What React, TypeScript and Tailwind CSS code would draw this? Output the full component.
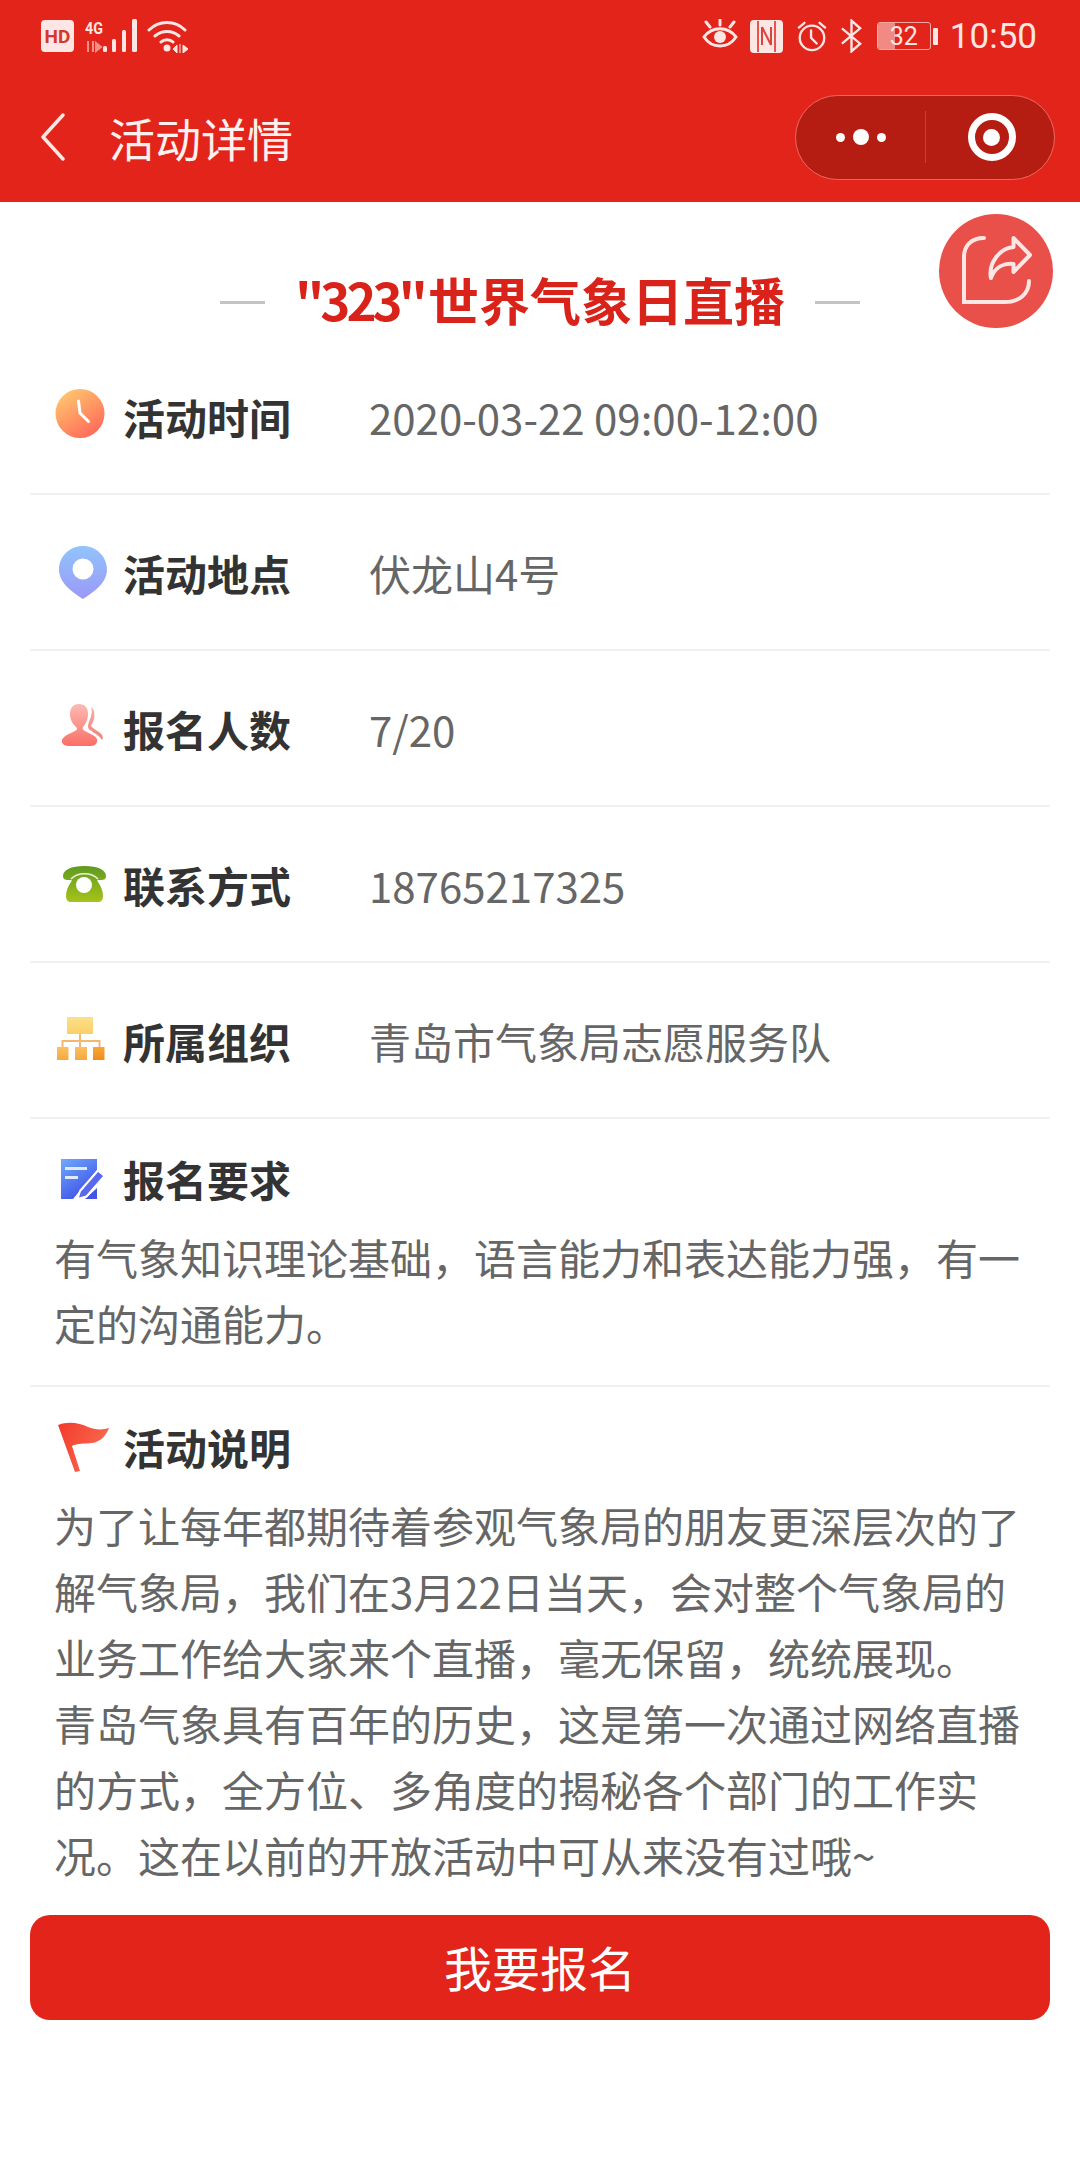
import type { ReactNode } from 'react'

const CJK = "font-['Noto_Sans_CJK_SC','Noto_Sans',sans-serif]"

function ClockIcon() {
  return (
    <svg width="64" height="64" viewBox="0 0 64 64">
      <defs>
        <linearGradient id="clockFill" x1="0.15" y1="0" x2="0.8" y2="1">
          <stop offset="0" stopColor="#ffcb70" />
          <stop offset="1" stopColor="#ff6558" />
        </linearGradient>
      </defs>
      <circle cx="30" cy="29.500" r="24.500" fill="url(#clockFill)" />
      <path d="M28.500 17l1.500 12 8.500 8.500" fill="none" stroke="#fff" strokeWidth="3" strokeLinecap="round" strokeLinejoin="round" />
    </svg>
  )
}

function PinIcon() {
  return (
    <svg width="64" height="64" viewBox="0 0 64 64">
      <defs>
        <linearGradient id="pinFill" x1="0" y1="0" x2="0" y2="1">
          <stop offset="0" stopColor="#92c4fb" />
          <stop offset="1" stopColor="#9a98f8" />
        </linearGradient>
      </defs>
      <path
        d="M33 6C19.700 6 9 16.500 9 29.500c0 14 14 23 24 29.500 10-6.500 24-15.500 24-29.500C57 16.500 46.300 6 33 6z"
        fill="url(#pinFill)"
      />
      <circle cx="33" cy="29" r="10.500" fill="#fff" />
    </svg>
  )
}

function PeopleIcon() {
  return (
    <svg width="64" height="64" viewBox="0 0 64 64">
      <defs>
        <linearGradient id="peopleFill" x1="0" y1="0" x2="0" y2="1">
          <stop offset="0" stopColor="#fbbab5" />
          <stop offset="1" stopColor="#fb6f66" />
        </linearGradient>
        <linearGradient id="peopleBack" x1="0" y1="0" x2="0" y2="1">
          <stop offset="0" stopColor="#f9aaa4" />
          <stop offset="1" stopColor="#fb7f76" />
        </linearGradient>
      </defs>
      <path
        d="M41 11c3 2 4 7 3 12-1 3-2 5-3 7 2 3 8 5 11 9 1 2 1 4 0 5-3-5-8-7-12-10-3-2-2-5-1-8 2-5 4-10 2-15z"
        fill="url(#peopleBack)"
      />
      <path
        d="M29 8c6 0 9 4 9 10 0 6-3 11-5 13-1 2 0 3 2 4 5 3 10 4 12 8 1 4-2 7-6 7H19c-5 0-8-3-7-6 2-5 8-6 13-9 2-1 3-2 1-4-3-3-6-7-6-13 0-6 3-10 9-10z"
        fill="url(#peopleFill)"
      />
    </svg>
  )
}

function PhoneIcon() {
  return (
    <svg width="64" height="64" viewBox="0 0 64 64">
      <defs>
        <linearGradient id="phoneFill" x1="0" y1="0" x2="0" y2="1">
          <stop offset="0" stopColor="#5e9a20" />
          <stop offset="1" stopColor="#a6c31a" />
        </linearGradient>
      </defs>
      <path
        d="M13 24c0-6 8-10 21.500-10S56 18 56 24c0 3-2 4-5 4h-3c-1 0-1 1 0 2 3 4 5 9 5 14 0 4-2 6-5 6H21c-3 0-5-2-5-6 0-5 2-10 5-14 1-1 1-2 0-2h-3c-3 0-5-1-5-4z"
        fill="url(#phoneFill)"
      />
      <path d="M21 27c7-7 20-7 27 0" fill="none" stroke="#fff" strokeWidth="1.500" opacity="0.850" />
      <circle cx="34" cy="33" r="8" fill="#fff" />
    </svg>
  )
}

function OrgIcon() {
  return (
    <svg width="64" height="64" viewBox="0 0 64 64">
      <defs>
        <linearGradient id="orgTop" x1="0" y1="0" x2="0" y2="1">
          <stop offset="0" stopColor="#fce08a" />
          <stop offset="1" stopColor="#fad067" />
        </linearGradient>
        <linearGradient id="orgLeft" x1="0" y1="0" x2="0" y2="1">
          <stop offset="0" stopColor="#fbc063" />
          <stop offset="1" stopColor="#f6a840" />
        </linearGradient>
        <linearGradient id="orgRight" x1="0" y1="0" x2="0" y2="1">
          <stop offset="0" stopColor="#f7a63a" />
          <stop offset="1" stopColor="#f08c18" />
        </linearGradient>
      </defs>
      <rect x="17" y="9" width="26" height="17" fill="url(#orgTop)" />
      <path d="M30 26v13M12.500 39v-6h37v6" fill="none" stroke="#f2b870" strokeWidth="2" />
      <rect x="7" y="39" width="11.500" height="13" fill="url(#orgLeft)" />
      <rect x="25" y="39" width="12" height="13" fill="url(#orgLeft)" />
      <rect x="43" y="39" width="11.500" height="13" fill="url(#orgRight)" />
    </svg>
  )
}

function NoteIcon() {
  return (
    <svg width="64" height="64" viewBox="0 0 64 64">
      <defs>
        <linearGradient id="noteFill" x1="0" y1="0" x2="0.600" y2="1">
          <stop offset="0" stopColor="#70aafb" />
          <stop offset="1" stopColor="#3f51e8" />
        </linearGradient>
      </defs>
      <path d="M11 13h36v11L23 53H11z" fill="url(#noteFill)" />
      <path d="M47 42v11H35z" fill="#4552e6" />
      <rect x="15" y="21" width="22" height="3" fill="#dfeafe" />
      <rect x="15" y="30" width="13" height="3" fill="#dfeafe" />
      <path d="M27.500 53l2.500-8 18-20.500 6.500 5.500-18 20.500z" fill="#5a68ee" stroke="#fff" strokeWidth="2" strokeLinejoin="round" />
    </svg>
  )
}

function FlagIcon() {
  return (
    <svg width="64" height="64" viewBox="0 0 64 64">
      <defs>
        <linearGradient id="flagFill" x1="0" y1="0" x2="1" y2="0.500">
          <stop offset="0" stopColor="#f23a2c" />
          <stop offset="1" stopColor="#fb6a50" />
        </linearGradient>
      </defs>
      <path
        d="M8 11C18 7 30 9 38 13c7 3 15 3 21 1-3 8-9 14-17 15-8 1-14 0-20 3l8 25-5 1z"
        fill="url(#flagFill)"
      />
    </svg>
  )
}

function StatusLeft() {
  return (
    <div className="flex items-center">
      <div className="flex h-[32px] w-[33px] items-center justify-center rounded-[4px] bg-[#fde6e3] font-['Roboto',sans-serif] text-[19px] leading-none font-bold text-[#d9352a]">
        HD
      </div>
      <svg className="ml-[11px]" width="53" height="34" viewBox="0 0 53 34">
        <text x="0" y="15" fill="#fde6e3" fontFamily="Roboto, sans-serif" fontSize="16" fontWeight="700" textLength="18" lengthAdjust="spacingAndGlyphs">
          4G
        </text>
        <path d="M3 22v11M8 22v11M11 24l5 4-5 4z" stroke="#f59089" strokeWidth="2" fill="#f59089" />
        <rect x="18" y="27" width="4" height="6" rx="1.500" fill="#fde6e3" />
        <rect x="27" y="20" width="4" height="13" rx="1.500" fill="#fde6e3" />
        <rect x="37" y="11" width="4" height="22" rx="1.500" fill="#fde6e3" />
        <rect x="47" y="0" width="5" height="33" rx="1.500" fill="#fde6e3" />
      </svg>
      <svg className="ml-[9px]" width="42" height="34" viewBox="0 0 42 34">
        <path d="M2 11c10-10 26-10 36 0M8 17c7-6 17-6 24 0M14 23c3-3 9-3 12 0" fill="none" stroke="#fde6e3" strokeWidth="3" strokeLinecap="round" />
        <circle cx="20" cy="29" r="3.500" fill="#fde6e3" />
        <path d="M26 30l4-4v8zM33 25v9M36 26l5 4-5 4z" fill="#fde6e3" stroke="#fde6e3" strokeWidth="1" />
      </svg>
    </div>
  )
}

function StatusRight() {
  return (
    <div className="flex items-center">
      <svg width="36" height="34" viewBox="0 0 36 34">
        <path d="M2 18c8-11 24-11 32 0-8 12-24 12-32 0z" fill="none" stroke="#fde6e3" strokeWidth="3" />
        <circle cx="18" cy="18" r="6" fill="#fde6e3" />
        <path d="M8 8L4 3M18 6V1M28 8l4-5" stroke="#fde6e3" strokeWidth="3" strokeLinecap="round" />
      </svg>
      <svg className="ml-[12px]" width="33" height="34" viewBox="0 0 33 34">
        <rect x="0" y="1" width="33" height="33" rx="4" fill="#fde6e3" />
        <path d="M8 2v31M25 2v31" stroke="#e3241a" strokeWidth="1.500" />
        <path d="M12 8v18M21 8v18M12 8l9 18" fill="none" stroke="#d9453c" strokeWidth="2" />
      </svg>
      <svg className="ml-[13px]" width="32" height="34" viewBox="0 0 34 34">
        <circle cx="17" cy="19" r="13" fill="none" stroke="#fde6e3" strokeWidth="2.500" />
        <path d="M16 11v8l6 6M3 8l6-5M31 8l-6-5" fill="none" stroke="#fde6e3" strokeWidth="2.500" strokeLinecap="round" />
      </svg>
      <svg className="ml-[12px]" width="23" height="34" viewBox="0 0 24 34">
        <path d="M2 9l19 16-9 8V1l9 8L2 25" fill="none" stroke="#fde6e3" strokeWidth="2.500" />
      </svg>
      <div className="relative ml-[14px] flex h-[28px] w-[54px] items-center justify-center overflow-hidden rounded-[3px] border border-[#f5a9a3]">
        <div className="absolute top-0 bottom-0 left-0 w-[17px] bg-[#f08a83]" />
        <span className="relative font-['Roboto',sans-serif] text-[25px] leading-none text-[#fde6e3]">32</span>
      </div>
      <div className="ml-[2px] h-[17px] w-[5px] rounded-[1px] bg-[#fde6e3]" />
      <span className="ml-[12px] font-['Roboto',sans-serif] text-[35px] leading-none text-[#fde6e3]">10:50</span>
    </div>
  )
}

function Capsule() {
  return (
    <div className="flex h-[85px] w-[260px] items-center rounded-full border border-[#ec6a60] bg-[#b51c12]">
      <div className="flex h-[52px] w-[130px] items-center justify-center gap-[8px] border-r border-[#cf3c30]">
        <span className="h-[9px] w-[9px] rounded-full bg-white" />
        <span className="h-[16px] w-[16px] rounded-full bg-white" />
        <span className="h-[9px] w-[9px] rounded-full bg-white" />
      </div>
      <div className="flex flex-1 items-center justify-center pl-[3px]">
        <div className="flex h-[48px] w-[48px] items-center justify-center rounded-full border-[7px] border-white">
          <span className="h-[17px] w-[17px] rounded-full bg-white" />
        </div>
      </div>
    </div>
  )
}

function InfoRow({ icon, label, value }: { icon: ReactNode; label: string; value: string }) {
  return (
    <div className="flex h-[156px] items-center border-b-2 border-[#f0f0f0]">
      <div className="ml-[20px] w-[73px]">{icon}</div>
      <div className="w-[246px] text-[42px] font-bold text-[#333]">{label}</div>
      <div className="text-[42px] text-[#666]">{value}</div>
    </div>
  )
}

function TextSection({ icon, label, children }: { icon: ReactNode; label: string; children: ReactNode }) {
  return (
    <div>
      <div className="flex h-[64px] items-center">
        <div className="ml-[20px] w-[73px]">{icon}</div>
        <div className="text-[42px] font-bold text-[#333]">{label}</div>
      </div>
      <div className="mt-[14px] px-[24px] text-[42px] leading-[66px] text-[#666]">{children}</div>
    </div>
  )
}

export default function App() {
  return (
    <div className={`relative h-[2160px] w-[1080px] overflow-hidden bg-white ${CJK}`}>
      <header className="h-[202px] bg-[#e3241a]">
        <div className="flex h-[72px] items-center justify-between pr-[43px] pl-[41px]">
          <StatusLeft />
          <StatusRight />
        </div>
        <div className="flex h-[130px] items-center pr-[25px] pl-[40px]">
          <svg width="26" height="48" viewBox="0 0 26 48">
            <path d="M23 2L3 24l20 22" fill="none" stroke="#fde6e3" strokeWidth="3.500" strokeLinecap="round" strokeLinejoin="round" />
          </svg>
          <div className="ml-[43px] flex-1 text-[46px] leading-none text-[#fdf0ee]">活动详情</div>
          <Capsule />
        </div>
      </header>

      <button className="absolute top-[214px] left-[939px] flex h-[114px] w-[114px] items-center justify-center rounded-full bg-[#e9504a]">
        <svg width="72" height="72" viewBox="0 0 72 72">
          <path d="M24 3C11 3 4 11 4 22v45h41c15 0 24-9 24-21" fill="none" stroke="#fde6e3" strokeWidth="4" strokeLinecap="round" />
          <path
            d="M53.500 3L70 20 53.500 37v-8C44 28 35 32 31 43c-3-15 9-30 22.500-31z"
            fill="none"
            stroke="#fde6e3"
            strokeWidth="4"
            strokeLinejoin="round"
          />
        </svg>
      </button>

      <div className="flex h-[137px] items-center justify-center pt-[60px]">
        <div className="mt-[3px] h-[3px] w-[45px] bg-[#c4c4c4]" />
        <h1 className="mx-[30px] pb-[2px] text-[51px] leading-none font-bold text-[#d9231a]">
          <span className="tracking-[-4px]">"323"</span>
          <span className="ml-[4px]">世界气象日直播</span>
        </h1>
        <div className="mt-[3px] h-[3px] w-[45px] bg-[#c4c4c4]" />
      </div>

      <main className="mx-[30px]">
        <InfoRow icon={<ClockIcon />} label="活动时间" value="2020-03-22 09:00-12:00" />
        <InfoRow icon={<PinIcon />} label="活动地点" value="伏龙山4号" />
        <InfoRow icon={<PeopleIcon />} label="报名人数" value="7/20" />
        <InfoRow icon={<PhoneIcon />} label="联系方式" value="18765217325" />
        <InfoRow icon={<OrgIcon />} label="所属组织" value="青岛市气象局志愿服务队" />
        <div className="border-b-2 border-[#f0f0f0] pt-[27px] pb-[29px]">
          <TextSection icon={<NoteIcon />} label="报名要求">
            有气象知识理论基础，语言能力和表达能力强，有一定的沟通能力。
          </TextSection>
        </div>
        <div className="pt-[27px] pb-[27px]">
          <TextSection icon={<FlagIcon />} label="活动说明">
            <p>为了让每年都期待着参观气象局的朋友更深层次的了解气象局，我们在3月22日当天，会对整个气象局的业务工作给大家来个直播，毫无保留，统统展现。</p>
            <p>青岛气象具有百年的历史，这是第一次通过网络直播的方式，全方位、多角度的揭秘各个部门的工作实况。这在以前的开放活动中可从来没有过哦~</p>
          </TextSection>
        </div>
        <button className="h-[105px] w-full rounded-[20px] bg-[#e3241a] pb-[3px] text-[48px] text-white">我要报名</button>
      </main>
    </div>
  )
}
